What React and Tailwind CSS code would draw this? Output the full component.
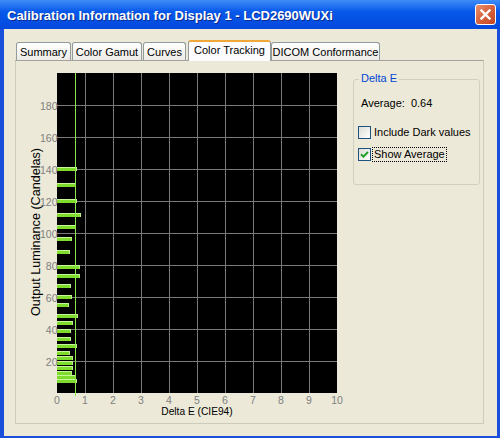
import React from "react";

// [luminance, deltaE] samples read off the Color Tracking chart
const samples = [
  [140, 0.72], [130, 0.67], [120, 0.71], [111, 0.86], [104, 0.68], [96, 0.52],
  [88, 0.48], [79, 0.83], [73, 0.83], [67, 0.49], [60, 0.52], [55, 0.43],
  [48, 0.76], [43.5, 0.56], [39, 0.5], [34, 0.49], [29.5, 0.72], [25, 0.46],
  [22, 0.56], [18.5, 0.58], [15.5, 0.56], [12.5, 0.52], [10, 0.68], [7.5, 0.72],
];

const tabs = [
  { label: "Summary", w: "w-[55px]", ml: "ml-0" },
  { label: "Color Gamut", w: "w-[70px]", ml: "ml-[1px]" },
  { label: "Curves", w: "w-[43px]", ml: "ml-[1px]" },
  { label: "Color Tracking", w: "w-[83px]", ml: "ml-[2px]", active: true },
  { label: "DICOM Conformance", w: "w-[109px]", ml: "ml-0" },
];

// plot geometry inside the svg
const PX = 41;
const PY = 12;
const PW = 280;
const PH = 320;
const AVG = 0.64;

const Chart = () => {
  const xs = Array.from({ length: 11 }, (_, i) => i);
  const ys = [20, 40, 60, 80, 100, 120, 140, 160, 180];
  const toY = (l) => PY + PH - l * 1.6;
  const toX = (d) => PX + d * 28;
  const font = "Liberation Sans, Arial, sans-serif";
  const avgX = Math.round(toX(AVG)) + 0.5;

  return (
    <svg width="330" height="360" className="shrink-0">
      <rect x={PX} y={PY} width={PW} height={PH} fill="#000" />
      {xs.slice(1, 10).map((i) => (
        <line key={"v" + i} x1={toX(i) + 0.5} x2={toX(i) + 0.5} y1={PY} y2={PY + PH} stroke="#7a7a7a" />
      ))}
      {ys.map((l) => (
        <line key={"h" + l} x1={PX} x2={PX + PW} y1={toY(l) + 0.5} y2={toY(l) + 0.5} stroke="#7a7a7a" />
      ))}

      {samples.map(([l, d], i) => {
        const y = Math.round(toY(l)) - 2;
        const w = Math.round(d * 28);
        return (
          <g key={i}>
            <rect x={PX} y={y} width={w} height={4} fill="#7fdc2c" />
            <rect x={PX} y={y} width={w} height={1} fill="#c6f59c" />
            <rect x={PX + w - 1} y={y} width={1} height={4} fill="#b8ef88" />
          </g>
        );
      })}

      <line x1={avgX} x2={avgX} y1={PY} y2={PY + PH + 3} stroke="#8ce84a" />

      {ys.map((l) => (
        <text key={"yl" + l} x={PX + 0.5} y={toY(l) + 1} textAnchor="end" dominantBaseline="central" fontSize="10.5" fill="#808080" fontFamily={font}>
          {l}
        </text>
      ))}
      {xs.map((i) => (
        <text key={"xl" + i} x={toX(i)} y={339} textAnchor="middle" dominantBaseline="central" fontSize="10.5" fill="#808080" fontFamily={font}>
          {i}
        </text>
      ))}
      <text x={181} y={350} textAnchor="middle" dominantBaseline="central" fontSize="10.2" fill="#000" fontFamily={font}>
        Delta E (CIE94)
      </text>
      <text
        transform="translate(20 171) rotate(-90)"
        textAnchor="middle"
        dominantBaseline="central"
        fontSize="12.6"
        fill="#000"
        fontFamily={font}
      >
        Output Luminance (Candelas)
      </text>
    </svg>
  );
};

const CheckBox = ({ checked }) => (
  <span className="w-[13px] h-[13px] shrink-0 border border-[#1c5180] bg-gradient-to-br from-[#dcdcd7] to-white flex items-center justify-center">
    {checked && (
      <svg width="9" height="9" viewBox="0 0 9 9">
        <path d="M1 4.2 L3.4 6.6 L8 2" fill="none" stroke="#21a121" strokeWidth="2" />
      </svg>
    )}
  </span>
);

export default function App() {
  return (
    <div className="w-[500px] h-[438px] bg-[#1a4fdc] flex flex-col overflow-hidden font-['Liberation_Sans',Arial,sans-serif] text-[11px] text-black">
      {/* Title bar */}
      <div className="h-[29px] shrink-0 flex items-start justify-between bg-gradient-to-b from-[#3d8cf8] via-[#0658ea] via-40% to-[#0548dc] pl-[7px] pr-[4px]">
        <span className="pt-[8px] text-[13px] leading-[16px] font-bold text-white [text-shadow:1px_1px_#0b2a8c]">
          Calibration Information for Display 1 - LCD2690WUXi
        </span>
        <button className="mt-[4px] w-[21px] h-[21px] rounded-[3px] border border-white bg-gradient-to-br from-[#e8906e] via-[#d8623c] to-[#c24722] flex items-center justify-center">
          <svg width="11" height="11" viewBox="0 0 11 11">
            <path d="M1.5 1.5 L9.5 9.5 M9.5 1.5 L1.5 9.5" stroke="#fff" strokeWidth="2.4" strokeLinecap="square" />
          </svg>
        </button>
      </div>

      {/* Client area */}
      <div className="flex-1 ml-[4px] mr-[3px] mb-[2px] bg-[#ece9d8] pt-[11px]">
        <div className="relative z-10 flex items-end pl-[12px]">
          {tabs.map((t) =>
            t.active ? (
              <div
                key={t.label}
                className={`${t.w} ${t.ml} h-[21px] mb-[-1px] rounded-t-[3px] border border-b-0 border-[#919b9c] border-t-2 border-t-[#f0a83a] bg-[#fcfcfe] flex justify-center pt-[2px] leading-[13px]`}
              >
                {t.label}
              </div>
            ) : (
              <div
                key={t.label}
                className={`${t.w} ${t.ml} h-[18px] rounded-t-[3px] border border-b-0 border-[#919b9c] bg-gradient-to-b from-white to-[#ecebe6] flex justify-center pt-[3px] leading-[13px]`}
              >
                {t.label}
              </div>
            )
          )}
        </div>

        <div className="ml-[11px] w-[469px] h-[364px] border border-[#cfcbba] border-t-[#a3a39b] flex">
          <Chart />

          <div className="relative ml-[7px] mt-[18px] w-[127px] h-[106px] rounded-[3px] border border-[#d0d0bf] pt-[17px] pl-[4px]">
            <span className="absolute -top-[8px] left-[5px] px-[2px] bg-[#ece9d8] text-[#0046d5] leading-[13px]">
              Delta E
            </span>
            <div className="ml-[3px] leading-[13px] whitespace-pre">Average:  0.64</div>
            <div className="mt-[16px] flex items-center gap-[2px] leading-[13px]">
              <CheckBox />
              <span className="pl-[1px]">Include Dark values</span>
            </div>
            <div className="mt-[8px] flex items-center gap-[1px] leading-[13px]">
              <CheckBox checked />
              <span className="border border-dotted border-black px-[1px]">Show Average</span>
            </div>
          </div>
        </div>
      </div>
    </div>
  );
}
